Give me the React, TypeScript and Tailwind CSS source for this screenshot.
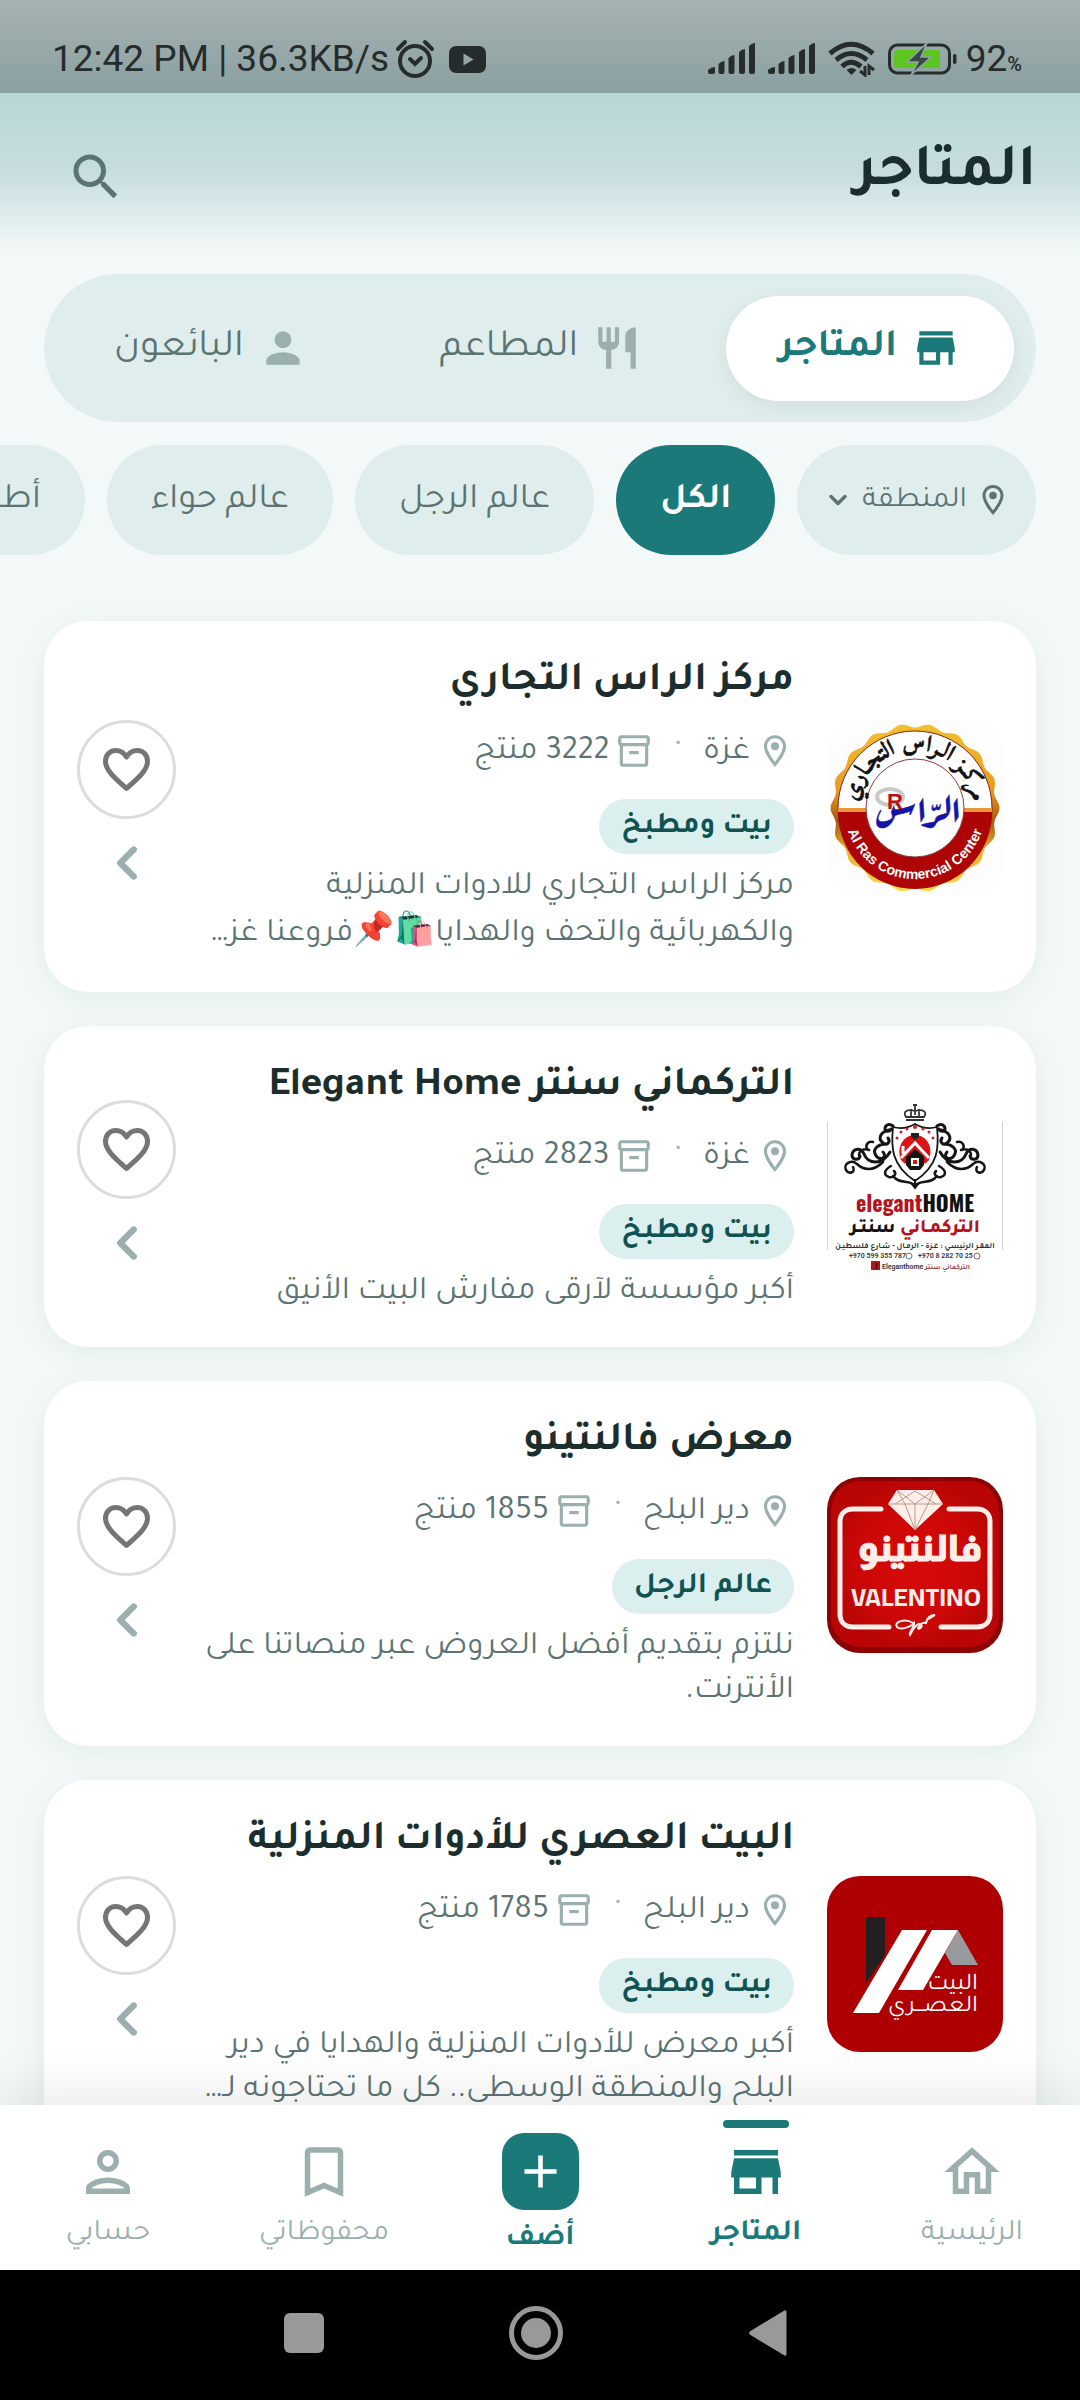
import React from 'react';
import {
  MdAdd,
  MdAlarm,
  MdBookmarkBorder,
  MdOutlineHome,
  MdOutlineInventory2,
  MdOutlineLocationOn,
  MdOutlinePerson,
  MdPerson,
  MdRestaurant,
  MdSearch,
  MdStore,
} from 'react-icons/md';
import { ChevronDown, ChevronLeft } from 'lucide-react';
import clsx from 'clsx';

interface Store {
  name: string;
  city: string;
  products: number;
  category: string;
  description: string[];
  logo: React.ReactNode;
}

const SEGMENTS = [
  { label: 'المتاجر', icon: MdStore },
  { label: 'المطاعم', icon: MdRestaurant },
  { label: 'البائعون', icon: MdPerson },
];

const CATEGORIES = ['الكل', 'عالم الرجل', 'عالم حواء', 'أطفال'];

// wavy gold edge of the seal
const SEAL_EDGE = Array.from({ length: 180 }, (_, i) => {
  const a = (i / 180) * Math.PI * 2;
  const r = 82.5 + 2 * Math.cos(a * 18);
  return `${(88 + r * Math.cos(a)).toFixed(1)},${(88 + r * Math.sin(a)).toFixed(1)}`;
}).join(' ');

function AlRasLogo() {
  return (
    <svg viewBox="0 0 176 176" className="size-full" direction="ltr">
      <defs>
        <linearGradient id="gold" x1="0" y1="0" x2="0" y2="1">
          <stop offset="0" stopColor="#f2c02f" />
          <stop offset="0.4" stopColor="#e99a1f" />
          <stop offset="0.58" stopColor="#a8590f" />
          <stop offset="0.75" stopColor="#e8ae2c" />
          <stop offset="1" stopColor="#f7dc55" />
        </linearGradient>
        <path id="seal-top" d="M30 88a58 58 0 0 1 116 0" />
        <path id="seal-bottom" d="M17 88a71 71 0 0 0 142 0" />
      </defs>
      <rect width="176" height="176" rx="33" fill="#fdfdfd" />
      <polygon points={SEAL_EDGE} fill="url(#gold)" />
      <circle cx="88" cy="88" r="77" fill="#fff" stroke="#7d2020" strokeWidth="1" />
      <path d="M11 92h154a77 77 0 0 1-154 0z" fill="#ad0505" />
      <path d="M11 88h154v4H11z" fill="#e8963a" />
      <circle cx="88" cy="88" r="49" fill="#fff" stroke="#8c3a3a" strokeWidth="1" />
      <text fontSize="23" fontWeight="700" fill="#111" stroke="#111" strokeWidth="0.7" textAnchor="middle" className="font-['Amiri','DejaVu_Sans',serif]">
        <textPath href="#seal-top" startOffset="50%">مركـز الـراس التجـاري</textPath>
      </text>
      <text fontSize="14" fontWeight="700" fill="#fff" textAnchor="middle" className="font-['Liberation_Sans',sans-serif]">
        <textPath href="#seal-bottom" startOffset="50%">Al Ras Commercial Center</textPath>
      </text>
      <ellipse cx="63" cy="77" rx="13" ry="8" fill="none" stroke="#c9c9cc" strokeWidth="4" />
      <text x="92" y="108" fontSize="43" fill="#1414a8" stroke="#1414a8" strokeWidth="0.6" textAnchor="middle" className="font-['Aref_Ruqaa','Amiri','DejaVu_Sans',serif]">
        الرّاس
      </text>
      <text x="60" y="89" fontSize="22" fontWeight="700" fill="#b80f12" className="font-['Liberation_Sans',sans-serif]">
        R
      </text>
    </svg>
  );
}

function Flourish() {
  return (
    <g fill="none" stroke="#151515" strokeLinecap="round">
      <path d="M66 26c-4-3-8-1-8 3 0 3 5 3 6 0M62 30c-8 2-12 8-6 13 4 3 8-1 5-5M60 44c-10 0-16 6-10 13 5 4 10-1 6-5" strokeWidth="3" />
      <path d="M63 52c-8 14-22 12-26 2-3-7-11-6-12 1 0 5 7 6 8 1" strokeWidth="3" />
      <path d="M56 62c-10 10-20 8-26 2-6-5-14 0-11 6 3 5 10 2 7-3" strokeWidth="2.5" />
      <path d="M46 42c-5-1-8 3-6 7M42 50c-6-2-10 1-10 5M64 66c-7 4-8 9-2 11 5 1 8-3 5-6M66 76c6 8 14 4 20 8" strokeWidth="2.5" />
    </g>
  );
}

function ElegantHomeLogo() {
  return (
    <svg viewBox="0 0 176 176" className="size-full" direction="ltr">
      <path d="M.5 22v128M175.500 22v128" stroke="#d5d5d5" strokeWidth="1" />
      <Flourish />
      <g transform="translate(176 0) scale(-1 1)">
        <Flourish />
      </g>
      <path d="M79 20h18M79 17c-4-6 2-8 9-6 7-2 13 0 9 6zM84 16V9M92 16V9M88 15V4M86 5h4" fill="none" stroke="#333" strokeWidth="1.800" />
      <path d="M88 24c7 4 15 5 22 3 2 20 2 38-22 54C64 65 64 47 66 27c7 2 15 1 22-3z" fill="#fff" stroke="#151515" strokeWidth="1.800" />
      <path d="M74 60c-5-14 3-25 14-25s19 11 14 25l-4 4-10-14-10 14z" fill="#dc1414" />
      <path d="M74 58l14-15 14 15M76 46v8" fill="none" stroke="#fff" strokeWidth="3" />
      <path d="M88 49l9 8v8l-4 5H83l-4-5v-8z" fill="#151515" />
      <rect x="84" y="58" width="8" height="8" fill="#fff" />
      <rect x="86" y="60" width="4" height="4" fill="#dc1414" />
      <path d="M84 33h8v4l-4 3-4-3z" fill="#222" />
      <g fill="#c22">
        <circle cx="70" cy="38" r="1.500" />
        <circle cx="74" cy="32" r="1.500" />
        <circle cx="80" cy="29" r="1.500" />
        <circle cx="88" cy="27" r="2" />
        <circle cx="96" cy="29" r="1.500" />
        <circle cx="102" cy="32" r="1.500" />
        <circle cx="106" cy="38" r="1.500" />
      </g>
      <path d="M88 79v8M84 83l4 5 4-5" stroke="#151515" strokeWidth="2" fill="none" />
      <text x="88" y="112" fontSize="22" fontWeight="700" textAnchor="middle" fill="#111" className="font-['Oswald','Teko','Roboto_Condensed','DejaVu_Sans_Condensed',sans-serif]">
        <tspan fill="#b8131b">elegant</tspan>HOME
      </text>
      <g textAnchor="middle" className="font-['Tajawal','DejaVu_Sans',sans-serif]">
        <text x="88" y="132" fontSize="19" fontWeight="800" fill="#111" direction="rtl">
          <tspan fill="#b8131b">التركمـاني</tspan> سنتـر
        </text>
        <text x="88" y="148" fontSize="8" fontWeight="700" fill="#333" direction="rtl">
          المقـر الرئيسـي : غـزة - الرمـال - شـارع فلسطيـن
        </text>
      </g>
      <g fontSize="7" fontWeight="600" fill="#333" className="font-['Roboto','Tajawal',sans-serif]">
        <text x="22" y="158">+970 599 355 787</text>
        <circle cx="82" cy="156" r="3" fill="none" stroke="#777" />
        <text x="91" y="158">+970 8 282 70 25</text>
        <circle cx="150" cy="156" r="3" fill="none" stroke="#a55" />
        <rect x="44" y="161" width="9" height="9" fill="#b8131b" />
        <text x="48" y="169" fill="#111">f</text>
        <text x="55" y="169">Eleganthome</text>
        <text x="98" y="169" fill="#944">التركماني سنتر</text>
      </g>
    </svg>
  );
}

function ValentinoLogo() {
  return (
    <svg viewBox="0 0 176 176" className="size-full" direction="ltr">
      <defs>
        <radialGradient id="ruby">
          <stop offset="0" stopColor="#d60b09" />
          <stop offset="0.7" stopColor="#cb0807" />
          <stop offset="1" stopColor="#b90505" />
        </radialGradient>
      </defs>
      <rect width="176" height="176" rx="33" fill="#8c0303" />
      <rect x="4" y="4" width="168" height="166" rx="30" fill="url(#ruby)" />
      <g fill="none" stroke="#fdeeea" strokeWidth="5" strokeLinecap="round">
        <path d="M54 32H26c-8 0-13 5-13 13v92c0 8 5 13 13 13h36" />
        <path d="M122 32h28c8 0 13 5 13 13v92c0 8-5 13-13 13h-36" />
      </g>
      <path d="M70 13h37l9 14-28 26-27-26z" fill="#fdeeea" />
      <path d="M61 27h55M70 13l18 14 19-14M68 27l20-13 21 13M88 27v26M70 13l8 14 10 26 13-26 6-14" fill="none" stroke="#b98" strokeWidth="1" />
      <text x="93" y="84" fontSize="37" fontWeight="800" fill="#fdeeea" stroke="#fdeeea" strokeWidth="1" textAnchor="middle" className="font-['Almarai','Tajawal','DejaVu_Sans',sans-serif]">
        فالنتينو
      </text>
      <text x="89" y="129" fontSize="26" fontWeight="700" fill="#fdeeea" textAnchor="middle" className="font-['Cairo','Roboto',sans-serif]">
        VALENTINO
      </text>
      <path d="M86 146c-8-5-20-1-16 4 4 4 15-1 17-4 1 4-6 10-4 12 2-4 7-13 11-11 2 3-2 6-3 4 3-5 5-6 8-5 1-5 4-8 9-8-3 1-5 4-7 4" fill="none" stroke="#fdeeea" strokeWidth="2" />
    </svg>
  );
}

function AsriLogo() {
  return (
    <svg viewBox="0 0 176 176" className="size-full" direction="ltr">
      <rect width="176" height="176" rx="33" fill="#ae0002" />
      <path d="M39 41h19v38l-19 28z" fill="#231f20" />
      <path d="M75 54h25L52 137H26zM105 54h26l-35 60H71z" fill="#fff" />
      <path d="M131 54l20 35h-26l-7-12z" fill="#989a9d" />
      <g fontSize="24" fill="#fff" direction="rtl" className="font-['Tajawal','DejaVu_Sans',sans-serif]">
        <text x="151" y="113">البيت</text>
        <text x="151" y="135">العصـــري</text>
      </g>
    </svg>
  );
}

const STORES: Store[] = [
  {
    name: 'مركز الراس التجاري',
    city: 'غزة',
    products: 3222,
    category: 'بيت ومطبخ',
    description: ['مركز الراس التجاري للادوات المنزلية', 'والكهربائية والتحف والهدايا🛍️📌فروعنا غز…'],
    logo: <AlRasLogo />,
  },
  {
    name: 'التركماني سنتر Elegant Home',
    city: 'غزة',
    products: 2823,
    category: 'بيت ومطبخ',
    description: ['أكبر مؤسسة لآرقى مفارش البيت الأنيق'],
    logo: <ElegantHomeLogo />,
  },
  {
    name: 'معرض فالنتينو',
    city: 'دير البلح',
    products: 1855,
    category: 'عالم الرجل',
    description: ['نلتزم بتقديم أفضل العروض عبر منصاتنا على', 'الأنترنت.'],
    logo: <ValentinoLogo />,
  },
  {
    name: 'البيت العصري للأدوات المنزلية',
    city: 'دير البلح',
    products: 1785,
    category: 'بيت ومطبخ',
    description: ['أكبر معرض للأدوات المنزلية والهدايا في دير', 'البلح والمنطقة الوسطى.. كل ما تحتاجونه لـ…'],
    logo: <AsriLogo />,
  },
];

function SignalBars() {
  return (
    <svg viewBox="0 0 48 32" className="h-8 w-12 fill-[#262c2c]">
      <path d="M0 27q3-3 7-3v5q0 2-2 2H2q-2 0-2-2zM10.500 21q3-3 6-3v11q0 2-2 2h-2q-2 0-2-2zM20.500 15q3-3 6-3v17q0 2-2 2h-2q-2 0-2-2zM31 9q3-3 6-3v23q0 2-2 2h-2q-2 0-2-2zM41 3q3-3 6-3v29q0 2-2 2h-2q-2 0-2-2z" />
    </svg>
  );
}

function StatusBar() {
  return (
    <div dir="ltr" className="flex h-[93px] shrink-0 items-end justify-between bg-linear-to-b from-[#a7b2b2] to-[#8aa0a1] pr-[58px] pb-3 pl-[52px] font-['Roboto',sans-serif] text-[#262c2c]">
      <div className="flex items-center gap-1">
        <span className="text-[37px] leading-[44px]">12:42 PM | 36.3KB/s</span>
        <svg viewBox="0 0 44 44" className="size-11 fill-none stroke-[#262c2c]" strokeWidth="4" strokeLinecap="round">
          <circle cx="22" cy="24" r="15" />
          <path d="M5 12l7-7M39 12l-7-7M17 22l5 5 6-6" />
        </svg>
        <svg viewBox="0 0 37 27" className="ml-2 h-[27px] w-[37px]">
          <rect width="37" height="27" rx="7" fill="#262c2c" />
          <path d="M14.500 7.500v12l10-6z" fill="#95a5a5" />
        </svg>
      </div>
      <div className="flex items-center gap-3">
        <SignalBars />
        <SignalBars />
        <svg viewBox="0 0 48 36" className="h-9 w-12">
          <g fill="none" stroke="#262c2c" strokeWidth="5">
            <path d="M2 12.500Q23 -6 45 12.500" />
            <path d="M8 19Q23 6 39 19" />
            <path d="M14 25.500Q23 17 33 25.500" />
          </g>
          <path d="M18.500 29q5-4 10 0l-5 5z" fill="#262c2c" />
          <path d="M37 25v9l-5-4M41 34v-9l5 4" fill="none" stroke="#262c2c" strokeWidth="3" />
        </svg>
        <svg viewBox="0 0 70 32" className="h-8 w-[70px]">
          <rect x="1.500" y="2" width="60" height="28" rx="8" fill="none" stroke="#262c2c" strokeWidth="3" />
          <rect x="6" y="7" width="46" height="18" rx="3" fill="#5cc51f" />
          <path d="M39 0L19 19h11l-7 13 20-18H33z" fill="#3a4545" stroke="#93a5a5" strokeWidth="1.500" />
          <rect x="65" y="11" width="3.500" height="10" rx="1.700" fill="#262c2c" />
        </svg>
        <span className="-ml-1 text-[37px] leading-[44px]">
          92<span className="text-[20px] leading-none font-medium">%</span>
        </span>
      </div>
    </div>
  );
}

function StoreCard({ store }: { store: Store }) {
  return (
    <article className="flex items-center gap-[33px] rounded-[44px] bg-white px-[33px] pt-[33px] pb-[31px] shadow-[0_6px_33px_rgba(27,80,80,0.07)]">
      <div className="size-[176px] shrink-0">{store.logo}</div>

      <div className="min-w-0 flex-1 whitespace-nowrap">
        <h2 className="text-[41px] leading-[60px] font-bold text-[#1b2e2d]">{store.name}</h2>
        <div className="mt-[15px] flex h-11 items-center text-[33px] leading-[44px] text-[#5b7473]">
          <MdOutlineLocationOn className="ml-1.5 size-[38px] text-[#9aafae]" />
          <span className="pt-1.5">{store.city}</span>
          <span className="mx-[22px] text-[#9aafae]">·</span>
          <MdOutlineInventory2 className="ml-1.5 size-[38px] text-[#9aafae]" />
          <span className="pt-1.5">{store.products} منتج</span>
        </div>
        <span className="mt-[26px] flex h-[55px] w-fit items-center rounded-full bg-[#dbefee] px-[22px] pt-1 text-[30px] font-bold text-[#105352]">
          {store.category}
        </span>
        <p className="mt-[13px] text-[33px] leading-[44px] text-[#5b7473]">
          {store.description.map((line) => (
            <span key={line} className={clsx('block', line.includes('📌') && 'leading-[50px]')}>
              {line}
            </span>
          ))}
        </p>
      </div>

      <div className="flex shrink-0 flex-col items-center gap-[11px]">
        <button aria-label="حفظ" className="flex size-[99px] items-center justify-center rounded-full border-3 border-[#dcdcdc]">
          <svg viewBox="0 0 55 55" className="size-[55px] fill-none stroke-[#757575]" strokeWidth="5" strokeLinejoin="round">
            <path d="M27.500 46.500C17 37 6.500 28.500 6.500 19.500c0-6.500 4.500-11 10-11 5 0 9 3 11 6.500 2-3.500 6-6.500 11-6.500 5.500 0 10 4.500 10 11 0 9-10.500 17.500-21 27z" />
          </svg>
        </button>
        <ChevronLeft className="size-[66px] p-1.5 text-[#9aafae]" strokeWidth={2.8} />
      </div>
    </article>
  );
}

const NAV_ITEM = 'relative flex flex-col items-center text-[30px] leading-[36px]';

function BottomNav() {
  return (
    <nav className="relative z-10 grid h-[165px] shrink-0 grid-cols-5 bg-white text-[#9aafae] shadow-[0_-11px_55px_rgba(0,0,0,0.09)]">
      <a href="#home" className={clsx(NAV_ITEM, 'pt-[34px]')}>
        <MdOutlineHome className="size-[66px]" />
        <span className="mt-3">الرئيسية</span>
      </a>
      <a href="#stores" className={clsx(NAV_ITEM, 'pt-[34px] font-bold text-[#1b7a79]')}>
        <span className="absolute top-[15px] h-2 w-[66px] rounded-full bg-[#1b7a79]" />
        <MdStore className="size-[66px]" />
        <span className="mt-3">المتاجر</span>
      </a>
      <a href="#add" className={clsx(NAV_ITEM, 'pt-7 font-bold text-[#1b7a79]')}>
        <span className="flex size-[77px] items-center justify-center rounded-[22px] bg-[#1b7a79]">
          <MdAdd className="size-[55px] text-white" />
        </span>
        <span className="mt-3">أضف</span>
      </a>
      <a href="#saved" className={clsx(NAV_ITEM, 'pt-[34px]')}>
        <MdBookmarkBorder className="size-[66px]" />
        <span className="mt-3">محفوظاتي</span>
      </a>
      <a href="#account" className={clsx(NAV_ITEM, 'pt-[34px]')}>
        <MdOutlinePerson className="size-[66px]" />
        <span className="mt-3">حسابي</span>
      </a>
    </nav>
  );
}

function SystemNav() {
  return (
    <div dir="ltr" className="flex h-[130px] shrink-0 items-center justify-center gap-[158px] bg-black pr-2 pb-1">
      <button aria-label="التطبيقات الأخيرة" className="flex size-[74px] items-center justify-center">
        <span className="size-10 rounded-md bg-[#999]" />
      </button>
      <button aria-label="الشاشة الرئيسية" className="flex size-[74px] items-center justify-center">
        <span className="flex size-[54px] items-center justify-center rounded-full border-5 border-[#999]">
          <span className="size-[30px] rounded-full bg-[#999]" />
        </span>
      </button>
      <button aria-label="رجوع" className="flex size-[74px] items-center justify-center">
        <svg viewBox="0 0 38 46" className="h-[46px] w-[38px] fill-[#999]">
          <path d="M1.500 21L35 .8q2.500-1.500 2.500 1.500v41.400q0 3-2.500 1.500L1.500 25q-3-2 0-4z" />
        </svg>
      </button>
    </div>
  );
}

export default function App() {
  return (
    <div dir="rtl" lang="ar" className="flex h-screen flex-col overflow-hidden bg-[#f3f9f8] font-['Tajawal','DejaVu_Sans',sans-serif]">
      <StatusBar />

      <header className="flex h-[159px] shrink-0 items-start justify-between bg-linear-to-b from-[#b7d7d6] via-[#c7dde0] to-[#f3f9f8] px-11 pt-[46px]">
        <h1 className="text-[60px] leading-[72px] font-bold text-[#1b2e2d]">المتاجر</h1>
        <button aria-label="بحث" className="mt-2 ml-[22px] text-[#5b7473]">
          <MdSearch className="size-[60px]" />
        </button>
      </header>

      <main className="min-h-0 flex-1 pt-[22px]">
        {/* Segmented control */}
        <div className="mx-11 flex h-[148px] items-center justify-between rounded-full bg-[#dfedec] px-[22px]">
          {SEGMENTS.map(({ label, icon: Icon }, i) => (
            <button
              key={label}
              className={clsx(
                'flex h-[105px] items-center gap-3.5 rounded-full text-[39px]',
                i === 0
                  ? 'bg-white px-[53px] font-bold text-[#1b7a79] shadow-[0_6px_22px_rgba(0,0,0,0.06)]'
                  : 'px-12 text-[#5b7473]',
              )}
            >
              <Icon className={clsx('size-[50px]', i > 0 && 'text-[#9aafae]')} />
              <span className="pt-1">{label}</span>
            </button>
          ))}
        </div>

        {/* Filters */}
        <div className="mt-[23px] flex gap-[22px] overflow-hidden pr-11 whitespace-nowrap">
          <button className="flex h-[110px] shrink-0 items-center rounded-full bg-[#dfedec] px-[25px] text-[30px] text-[#5b7473]">
            <MdOutlineLocationOn className="ml-2 size-9" />
            <span className="pt-1">المنطقة</span>
            <ChevronDown className="mr-2 size-8 p-0.5" strokeWidth={3} />
          </button>
          {CATEGORIES.map((c, i) => (
            <button
              key={c}
              className={clsx(
                'h-[110px] shrink-0 rounded-full px-11 pt-1 text-[36px]',
                i === 0 ? 'bg-[#1b7a79] font-bold text-white' : 'bg-[#dfedec] text-[#5b7473]',
              )}
            >
              {c}
            </button>
          ))}
        </div>

        {/* Stores */}
        <div className="mt-[66px] flex flex-col gap-[34px] px-11">
          {STORES.map((store) => (
            <StoreCard key={store.name} store={store} />
          ))}
        </div>
      </main>

      <BottomNav />
      <SystemNav />
    </div>
  );
}
